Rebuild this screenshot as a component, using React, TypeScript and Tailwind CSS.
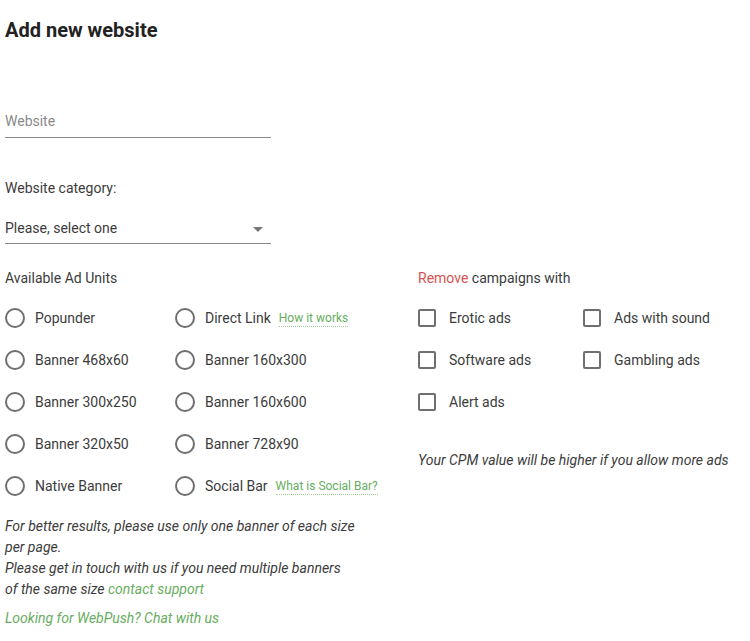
import { ReactNode } from 'react';

const adUnits: { label: string; hint?: string }[] = [
  { label: 'Popunder' },
  { label: 'Direct Link', hint: 'How it works' },
  { label: 'Banner 468x60' },
  { label: 'Banner 160x300' },
  { label: 'Banner 300x250' },
  { label: 'Banner 160x600' },
  { label: 'Banner 320x50' },
  { label: 'Banner 728x90' },
  { label: 'Native Banner' },
  { label: 'Social Bar', hint: 'What is Social Bar?' },
];

const exclusions = ['Erotic ads', 'Ads with sound', 'Software ads', 'Gambling ads', 'Alert ads'];

const Radio = ({ children }: { children: ReactNode }) => (
  <label className="flex h-[42px] items-center">
    <span className="mr-[10px] h-[20px] w-[20px] shrink-0 rounded-full border-2 border-[#6f6f6f]" />
    {children}
  </label>
);

const Checkbox = ({ children }: { children: ReactNode }) => (
  <label className="flex h-[42px] items-center">
    <span className="mr-[13px] h-[18px] w-[18px] shrink-0 rounded-[2px] border-2 border-[#6f6f6f]" />
    {children}
  </label>
);

export default function App() {
  return (
    <div
      className="min-h-[641px] w-[750px] bg-white pl-[5px] pt-[16px] text-[14px] leading-[20px] text-[#3c3c3c]"
      style={{ fontFamily: 'Roboto, "Liberation Sans", sans-serif' }}
    >
      <h1 className="text-[20px] font-bold leading-[28px] text-[#222]">Add new website</h1>

      {/* Website URL */}
      <div className="mt-[67px] w-[266px] border-b border-[#8a8a8a] pb-[6px] text-[#8a8a8a]">Website</div>

      {/* Category select */}
      <div className="mt-[40px]">Website category:</div>
      <div className="mt-[20px] flex w-[266px] items-center justify-between border-b border-[#8a8a8a] pb-[5px]">
        <span>Please, select one</span>
        <svg width="10" height="5" viewBox="0 0 10 5" className="mr-[8px] mt-[2px]">
          <path d="M0 0h10L5 5z" fill="#777" />
        </svg>
      </div>

      <div className="mt-[24px] flex">
        {/* Ad units */}
        <div className="w-[413px]">
          <div>Available Ad Units</div>
          <div className="mt-[9px] grid grid-cols-[170px_1fr]">
            {adUnits.map((u) => (
              <Radio key={u.label}>
                <span>{u.label}</span>
                {u.hint && (
                  <span className="ml-[8px] border-b border-dotted border-[#9ccc94] text-[12px] leading-[16px] text-[#68ad5f]">
                    {u.hint}
                  </span>
                )}
              </Radio>
            ))}
          </div>
          <p className="mt-[9px] italic leading-[21px]">
            For better results, please use only one banner of each size
            <br />
            per page.
            <br />
            Please get in touch with us if you need multiple banners
            <br />
            of the same size <span className="text-[#68ad5f]">contact support</span>
          </p>
          <p className="mt-[8px] italic text-[#68ad5f]">Looking for WebPush? Chat with us</p>
        </div>

        {/* Excluded campaign types */}
        <div>
          <div>
            <span className="text-[#d9534f]">Remove</span> campaigns with
          </div>
          <div className="mt-[9px] grid grid-cols-[165px_1fr]">
            {exclusions.map((e) => (
              <Checkbox key={e}>{e}</Checkbox>
            ))}
          </div>
          <p className="mt-[27px] italic">Your CPM value will be higher if you allow more ads</p>
        </div>
      </div>
    </div>
  );
}
